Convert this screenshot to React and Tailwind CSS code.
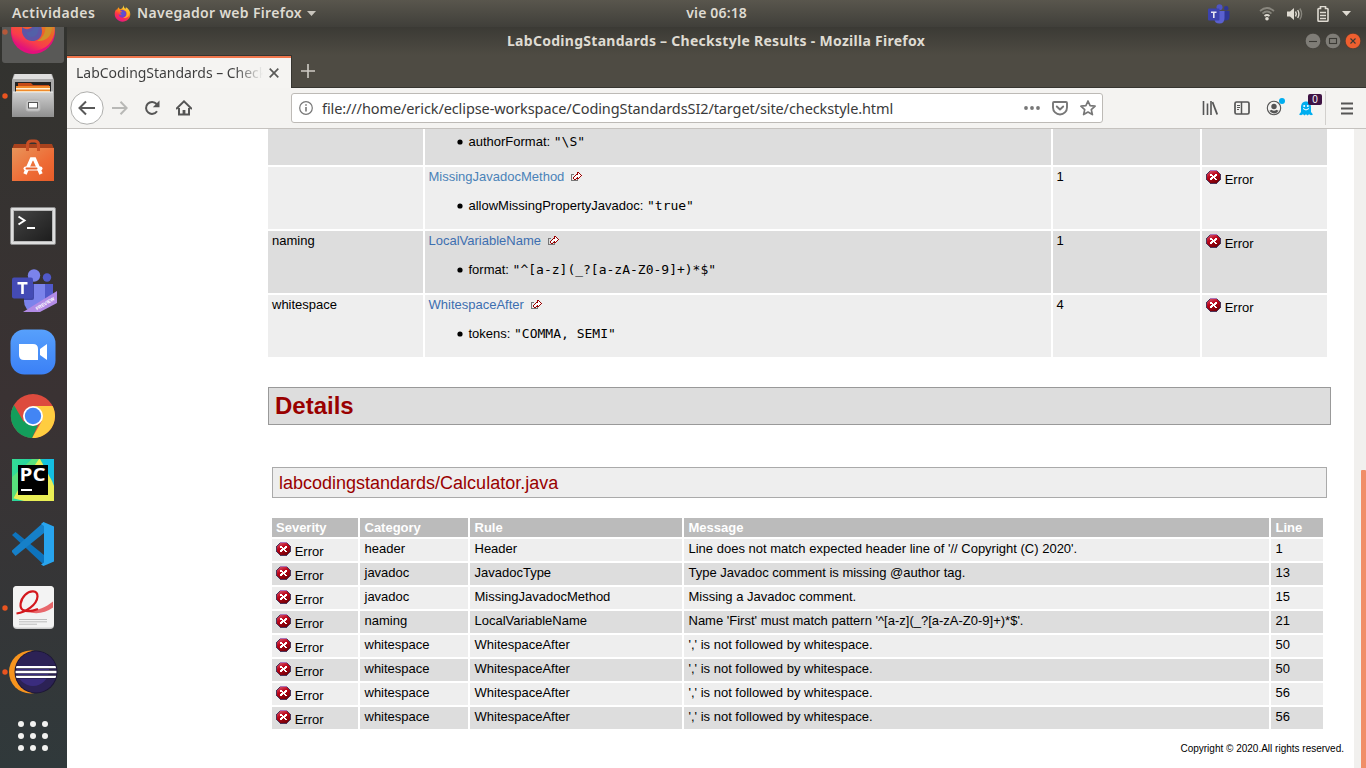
import React from "react";

const uiFont = "font-['Noto_Sans','Open_Sans',sans-serif]";

function ErrorIcon() {
  return (
    <svg className="block h-[15px] w-4 shrink-0" viewBox="0 0 16 15" shapeRendering="crispEdges">
      <defs>
        <linearGradient id="errFill" x1="0" y1="0" x2="0.5" y2="1">
          <stop offset="0" stopColor="#d4607c" />
          <stop offset="0.45" stopColor="#c0061c" />
          <stop offset="1" stopColor="#7c0008" />
        </linearGradient>
      </defs>
      <path d="M4 0h7v1h1v1h1v1h1v1h1v6h-1v1h-1v1h-1v1h-1v1H4v-1H3v-1H2v-1H1v-1H0V4h1V3h1V2h1V1h1z" fill="#4b3559" />
      <path d="M4 0h7v1H4z" fill="#a873b4" />
      <path d="M4 1h7v1h1v1h1v1h1v6h-1v1h-1v1h-1v1H4v-1H3v-1H2v-1H1V4h1V3h1V2h1z" fill="url(#errFill)" />
      <path d="M4 4h2v1h1v1h1V5h1V4h2v2h-1v1H9v1h1v1h1v1H9V9H8V8H7v1H6v1H4V8h1V7h1V6H4z" fill="#fff" />
    </svg>
  );
}

function ExternalIcon() {
  return (
    <svg className="ml-[7px] mt-[3px] h-[9px] w-[11px] shrink-0" viewBox="0 0 11 9" shapeRendering="crispEdges">
      <path d="M3 2.500H.5v6h6V7" fill="none" stroke="#777" />
      <path d="M7 1h1v1h1v1h1v1H9v1H8v1H7V5H5v1H4v1H3V5h1V4h1V3h2z" fill="#fff" />
      <path d="M6 0h1v1H6zM7 0h1v1H7zM8 1h1v1H8zM9 2h1v1H9zM10 3h1v1h-1zM9 4h1v1H9zM8 5h1v1H8zM7 6h1v1H7zM6 5h1v2H6zM5 6h1v1H5zM4 7h1v1H4zM3 7h1v1H3zM2 5h1v2H2zM3 4h1v1H3zM4 3h1v1H4zM5 2h2v1H5zM6 1h1v1H6z" fill="#900" />
    </svg>
  );
}

function ErrorCell() {
  return (
    <div className="flex pl-1 pt-[3px]">
      <ErrorIcon />
      <span className="ml-[2.7px] mt-[2px] leading-[15px]">Error</span>
    </div>
  );
}

const rules = [
  { cat: "", link: "MissingJavadocMethod", color: "text-[#4a82b8]", key: "allowMissingPropertyJavadoc:", val: '"true"', n: "1" },
  { cat: "naming", link: "LocalVariableName", color: "text-[#3d6fb0]", key: "format:", val: '"^[a-z](_?[a-zA-Z0-9]+)*$"', n: "1" },
  { cat: "whitespace", link: "WhitespaceAfter", color: "text-[#3d6fb0]", key: "tokens:", val: '"COMMA, SEMI"', n: "4" },
];

const details = [
  ["header", "Header", "Line does not match expected header line of '// Copyright (C) 2020'.", "1"],
  ["javadoc", "JavadocType", "Type Javadoc comment is missing @author tag.", "13"],
  ["javadoc", "MissingJavadocMethod", "Missing a Javadoc comment.", "15"],
  ["naming", "LocalVariableName", "Name 'First' must match pattern '^[a-z](_?[a-zA-Z0-9]+)*$'.", "21"],
  ["whitespace", "WhitespaceAfter", "',' is not followed by whitespace.", "50"],
  ["whitespace", "WhitespaceAfter", "',' is not followed by whitespace.", "50"],
  ["whitespace", "WhitespaceAfter", "',' is not followed by whitespace.", "56"],
  ["whitespace", "WhitespaceAfter", "',' is not followed by whitespace.", "56"],
];

function Property({ name, value }) {
  return (
    <div className="flex h-[15px] items-center leading-[15px]">
      <svg className="ml-7 mr-[6px] mt-px h-[6px] w-[6px]" viewBox="0 0 6 6">
        <circle cx="3" cy="3" r="2.6" fill="#000" />
      </svg>
      <span className="whitespace-pre">{name} </span>
      <span className="font-['DejaVu_Sans_Mono',monospace] text-[13px]">{value}</span>
    </div>
  );
}

const ruleGrid = "grid grid-cols-[155px_626px_147px_125px] gap-x-[2px]";
const detailGrid = "grid grid-cols-[86px_108px_212px_585px_52px] gap-x-[2px]";

function Page() {
  return (
    <main className="w-[1287px] shrink-0 bg-white pl-[201px] font-['Liberation_Sans',Arial,sans-serif] text-[13px] leading-[15px] text-black">
      <div className="flex w-[1059px] flex-col gap-[2px]">
        <div className={`${ruleGrid} h-9`}>
          <div className="bg-[#ddd]" />
          <div className="bg-[#ddd] pl-[3.5px] pt-[5px]"><Property name="authorFormat:" value={'"\\S"'} /></div>
          <div className="bg-[#ddd]" />
          <div className="bg-[#ddd]" />
        </div>
        {rules.map((r, i) => {
          const bg = i % 2 ? "bg-[#ddd]" : "bg-[#eee]";
          return (
            <div key={i} className={`${ruleGrid} h-[62px]`}>
              <div className={`${bg} pl-1 pt-[2px]`}>{r.cat}</div>
              <div className={`${bg} pl-[3.5px] pt-[2px]`}>
                <div className={`mb-[14px] flex ${r.color}`}>{r.link}<ExternalIcon /></div>
                <Property name={r.key} value={r.val} />
              </div>
              <div className={`${bg} pl-[3.5px] pt-[2px]`}>{r.n}</div>
              <div className={bg}><ErrorCell /></div>
            </div>
          );
        })}
      </div>
      <h2 className="mt-[30px] h-[38px] w-[1063px] border border-[#999] bg-[#ddd] pl-[6px] text-[24px] font-bold leading-[36px] text-[#900]">Details</h2>
      <h3 className="ml-1 mt-[42px] h-[31px] w-[1055px] border border-[#aaa] bg-[#eee] pl-[6px] text-[18px] leading-[30px] text-[#900]">labcodingstandards/Calculator.java</h3>
      <div className="ml-1 mt-5 flex flex-col gap-[2px]">
        <div className={`${detailGrid} h-[19px] font-bold text-white`}>
          {["Severity", "Category", "Rule", "Message", "Line"].map((h, j) => (
            <div key={h} className={`bg-[#bbb] pt-[2px] ${j ? "pl-[4.5px]" : "pl-1"}`}>{h}</div>
          ))}
        </div>
        {details.map((d, i) => {
          const bg = i % 2 ? "bg-[#ddd]" : "bg-[#eee]";
          return (
            <div key={i} className={`${detailGrid} h-[22px]`}>
              <div className={bg}><ErrorCell /></div>
              {d.map((t, j) => (
                <div key={j} className={`${bg} pl-[4.5px] pt-[2px]`}>{t}</div>
              ))}
            </div>
          );
        })}
      </div>
      <footer className="mt-[13px] pr-[10px] pt-px text-right text-[10px] leading-[12px]">Copyright © 2020.All rights reserved.</footer>
    </main>
  );
}

function FirefoxLogo({ className, id }) {
  return (
    <svg className={className} viewBox="0 0 48 48">
      <defs>
        <linearGradient id={`${id}a`} x1="0.8" y1="0.05" x2="0.35" y2="1">
          <stop offset="0.05" stopColor="#fff44f" />
          <stop offset="0.35" stopColor="#ff980e" />
          <stop offset="0.65" stopColor="#ff3647" />
          <stop offset="1" stopColor="#e31587" />
        </linearGradient>
        <radialGradient id={`${id}b`} cx="0.5" cy="0.45" r="0.6">
          <stop offset="0" stopColor="#4a5fd6" />
          <stop offset="1" stopColor="#8a2fc0" />
        </radialGradient>
      </defs>
      <path d="M28 1c-2 5 1 7 4 10 2-1 2-3 2-5 8 5 12 12 12 20 0 12-10 21-22 21S2 38 2 25c0-6 2-10 5-14 0 2 0 3 1 4 1-4 3-7 6-9 0 3 1 5 3 6 4-1 7-3 8-6 1-2 2-4 3-5z" fill={`url(#${id}a)`} />
      <path d="M17 16c3-3 8-3 11-1 5 2 8 6 7 11-1 6-6 10-12 10-6-1-10-5-10-10 3 2 6 2 9 0-3-1-5-3-5-5 2 0 5 0 6-2-1-1-4-1-6-3z" fill={`url(#${id}b)`} />
      <path d="M28 12c7 2 9 8 8 14-1 5-5 9-10 10 7 2 15-2 17-9 2-10-4-17-11-20 2 3 1 5-4 5z" fill="#ffbd2e" opacity="0.8" />
    </svg>
  );
}

function TeamsShape() {
  return (
    <g>
      <circle cx="22" cy="6.500" r="6.200" fill="#7b83eb" />
      <circle cx="35" cy="8.500" r="4.200" fill="#5059c9" />
      <path d="M26 15h15v13q0 8-8 8h-7z" fill="#5059c9" />
      <path d="M12 15h21v16q0 11-11 11-10 0-10-10z" fill="#7b83eb" />
      <path d="M12 15h10v14q0 2-2 2h-8z" fill="#4047a8" />
      <rect x="0" y="8.500" width="21" height="21" rx="2" fill="#444bb5" />
      <path d="M5.500 13h10v2.600h-3.700V25H9.200v-9.400H5.500z" fill="#fff" />
    </g>
  );
}

function TrayTeams() {
  return (
    <svg className="h-5 w-[22px]" viewBox="0 0 22 20">
      <circle cx="11.500" cy="3.300" r="3" fill="#4f55c4" />
      <circle cx="18.200" cy="4.200" r="2.200" fill="#2f3694" />
      <path d="M14 7h7.500v6q0 3.500-4 3.500H14z" fill="#2f3694" />
      <path d="M7 7h9.500v7q0 5.500-5 5.500T6.500 15z" fill="#5a60d0" />
      <rect x="0" y="4.500" width="11.500" height="12" rx="1" fill="#3b42ad" />
      <path d="M3 7.500h5.500v1.600H6.600V14H5V9.100H3z" fill="#e6e6f2" />
    </svg>
  );
}

function DockCell({ running, active, children }) {
  return (
    <div className="flex h-16 w-[67px] shrink-0">
      <svg className="h-16 w-[67px]" viewBox="0 0 67 64">
        {active && <rect x="2" y="1" width="62" height="62" rx="3" fill="#595957" />}
        {running && <circle cx="5" cy="32" r="2.700" fill={active ? "#b5583a" : "#e95420"} />}
        {children}
      </svg>
    </div>
  );
}

function Dock() {
  return (
    <nav className="flex h-[741px] w-[67px] shrink-0 flex-col justify-end overflow-hidden bg-gradient-to-b from-[#32332f] via-[#3a3233] to-[#30393b]">
      <DockCell running active>
        <defs>
          <linearGradient id="ffx" x1="0.9" y1="0" x2="0.4" y2="1">
            <stop offset="0.1" stopColor="#c8a52c" />
            <stop offset="0.5" stopColor="#ee6427" />
            <stop offset="0.8" stopColor="#f93c4b" />
            <stop offset="1" stopColor="#e0127c" />
          </linearGradient>
        </defs>
        <circle cx="33" cy="32" r="22" fill="#e4107c" />
        <ellipse cx="33" cy="29.500" rx="21.800" ry="21.500" fill="url(#ffx)" />
        <path d="M43 20c5 7 2 17-6 21 9 1 15-5 15-14z" fill="#d09028" />
        <path d="M22 27c3 3 8 3 11-1h8c3 8-1 15-9 15-5 0-9-4-10-9z" fill="#5f55a5" />
        <path d="M26 32c4 1 7-2 9-6h4c0 7-3 11-7 11-3 0-5-2-6-5z" fill="#5360a8" />
      </DockCell>

      <DockCell running>
        <defs>
          <linearGradient id="cab" x1="0" y1="0" x2="0" y2="1">
            <stop offset="0" stopColor="#d0d0d0" />
            <stop offset="1" stopColor="#8f8f8f" />
          </linearGradient>
        </defs>
        <path d="M14 10h38l2 6v37H12V16z" fill="#aaa" />
        <path d="M15 10h36l2 5H13z" fill="#dedede" />
        <rect x="15" y="18" width="36" height="12" fill="#232323" />
        <path d="M18 19h13l2 2h16v8H18z" fill="#c44a16" />
        <rect x="16" y="22" width="34" height="7" fill="#f08a2a" />
        <rect x="16" y="24" width="34" height="1.500" fill="#fff1d8" />
        <rect x="16" y="27" width="34" height="2" fill="#ffd08a" />
        <path d="M13 28h40l1 25H12z" fill="url(#cab)" />
        <path d="M13 28h40" stroke="#eee" />
        <rect x="26" y="36" width="14" height="11" rx="2" fill="#c9c9c9" stroke="#b5b5b5" />
        <rect x="28.500" y="38.500" width="9" height="5.500" fill="#fff" stroke="#555" />
      </DockCell>

      <DockCell>
        <defs>
          <linearGradient id="bag" x1="0" y1="0" x2="1" y2="1">
            <stop offset="0" stopColor="#e8945a" />
            <stop offset="0.6" stopColor="#ee6b35" />
            <stop offset="1" stopColor="#e65c28" />
          </linearGradient>
        </defs>
        <path d="M14 16h38l2 5H12z" fill="#a8421d" />
        <rect x="12" y="20" width="42" height="33" fill="url(#bag)" />
        <path d="M27.500 23v-6q0-4 4-4h3q4 0 4 4v6" fill="none" stroke="#c84f26" strokeWidth="3" />
        <path d="M25 46l6.500-15h3L41 46" fill="none" stroke="#fff" strokeWidth="3.500" />
        <rect x="23.500" y="38.500" width="19" height="4" rx="2" fill="#fff" />
        <rect x="25.500" y="39.500" width="12" height="2" rx="1" fill="#e9632d" />
      </DockCell>

      <DockCell>
        <defs>
          <linearGradient id="term" x1="0" y1="0" x2="1" y2="1">
            <stop offset="0" stopColor="#454545" />
            <stop offset="0.5" stopColor="#303030" />
            <stop offset="1" stopColor="#1d1d1d" />
          </linearGradient>
        </defs>
        <rect x="10.500" y="15.500" width="45" height="37" rx="1.500" fill="#dedede" stroke="#8c8c8c" />
        <rect x="13" y="18" width="40" height="32" fill="#b9b9b9" />
        <rect x="14" y="19" width="38" height="30" fill="url(#term)" />
        <path d="M18.500 24.500l6 4-6 4" fill="none" stroke="#fff" strokeWidth="2" />
        <path d="M27 36h8" stroke="#fff" strokeWidth="2" />
      </DockCell>

      <DockCell>
        <g transform="translate(12 13)"><TeamsShape /></g>
        <path d="M57 35v12L40 56H23z" fill="#b18be5" />
        <text x="0" y="0" transform="translate(37 54.500) rotate(-31)" fontSize="5" textLength="21" lengthAdjust="spacingAndGlyphs" fontWeight="bold" fill="#fff" fontFamily="Liberation Sans, sans-serif">PREVIEW</text>
      </DockCell>

      <DockCell>
        <defs>
          <linearGradient id="zm" x1="0" y1="0" x2="0" y2="1">
            <stop offset="0" stopColor="#57a0fc" />
            <stop offset="1" stopColor="#3b80f6" />
          </linearGradient>
        </defs>
        <rect x="10.500" y="9.500" width="45" height="45" rx="14" fill="url(#zm)" />
        <path d="M19 24h14q5 0 5 5v11H24q-5 0-5-5z" fill="#fff" />
        <path d="M47 24v16l-7-5v-6z" fill="#fff" />
      </DockCell>

      <DockCell>
        <circle cx="33" cy="32" r="22" fill="#dd4b3e" />
        <path d="M13.900 21L23.500 37.500 33 43l-9 9.500.5 0L33 54A22 22 0 0 1 13.900 21z" fill="#139e5b" />
        <path d="M33 22h19.600A22 22 0 0 1 32 54l9.500-16.500z" fill="#ffcd40" />
        <path d="M24 37l9 5 5-1-6 13A22 22 0 0 1 24 52z" fill="#139e5b" />
        <circle cx="33" cy="32" r="10" fill="#fff" />
        <circle cx="33" cy="32" r="8.200" fill="#4285f4" />
      </DockCell>

      <DockCell>
        <defs>
          <linearGradient id="pyc" x1="0" y1="0" x2="1" y2="0.2">
            <stop offset="0" stopColor="#35dc94" />
            <stop offset="0.6" stopColor="#1fd0a6" />
            <stop offset="0.8" stopColor="#14bfe2" />
          </linearGradient>
        </defs>
        <rect x="12" y="11" width="42" height="42" fill="url(#pyc)" />
        <path d="M34 11h6l12 22 2 5v15H24l-12-3V33z" fill="#e9ee55" />
        <path d="M12 29l20-18h7L18 42l-6 11z" fill="#58e07d" />
        <rect x="18" y="17" width="30" height="30" fill="#000" />
        <text x="19.500" y="32.500" fontSize="18" textLength="26" lengthAdjust="spacingAndGlyphs" fontWeight="bold" fill="#fff" fontFamily="Open Sans, sans-serif">PC</text>
        <rect x="21" y="41" width="11" height="2" fill="#fff" />
      </DockCell>

      <DockCell>
        <path d="M12 23l3.500-3L44 43v10z" fill="#0d73bd" />
        <path d="M12 40l3.500 4L44 21V10L12 38.500z" fill="#1680c9" />
        <path d="M43.500 10L54 14.500v35L43.500 54 41 52.500l3-2V14l-3-2z" fill="#28a4ee" />
      </DockCell>

      <DockCell running>
        <rect x="13" y="10" width="41" height="43" rx="4" fill="#ccc" />
        <rect x="13" y="10" width="41" height="41.500" rx="4" fill="#f3f3f3" />
        <path d="M24 33.500c8 3 19 0 29-8v6c-8 6-18 7-26 4z" fill="#e8686c" />
        <path d="M16.500 37.500C26 36 37 29 37.500 20.500 37.500 14 30 14 25 19c-5 5-6 13-2 15 4 2 10 1 15-1" fill="none" stroke="#d3181d" strokeWidth="2.200" />
        <path d="M19 43.500h28M19 45.800h28M19 48.200h18" stroke="#bdbdbd" />
      </DockCell>

      <DockCell running>
        <defs><clipPath id="ecl"><circle cx="36" cy="32" r="20.500" /></clipPath></defs>
        <circle cx="30.500" cy="32" r="21.500" fill="#f7941e" />
        <circle cx="36" cy="32" r="21.500" fill="#1d1736" />
        <g clipPath="url(#ecl)">
          <rect x="14" y="10" width="44" height="44" fill="#2c2255" />
          <circle cx="33" cy="30" r="16" fill="#3a2c7e" />
          <rect x="14" y="10" width="44" height="15" fill="#2c2255" />
          <path d="M14 28.200h44M14 33h44M14 37.800h44" stroke="#1d1736" strokeWidth="3.400" transform="translate(0 -1)" />
          <path d="M14 28.200h44M14 33h44M14 37.800h44" stroke="#fff" strokeWidth="2.300" transform="translate(0 -1)" />
        </g>
      </DockCell>

      <DockCell>
        {[20, 32, 44].map((y) => [21, 33, 45].map((x) => <circle key={`${x}-${y}`} cx={x} cy={y} r="3" fill="#f2f2f0" />))}
      </DockCell>
    </nav>
  );
}

function TopBar() {
  return (
    <header className={`${uiFont} grid h-[27px] w-full grid-cols-[1fr_auto_1fr] items-center bg-gradient-to-b from-[#59564d] to-[#403f3a] text-[14px] font-semibold leading-[25px] text-[#dfdbd2]`}>
      <div className="flex items-center pl-[12px]">
        <span className="w-[84px] whitespace-nowrap pb-[2px] tracking-[0.43px]">Actividades</span>
        <FirefoxLogo id="fft" className="ml-[18px] h-[17px] w-[17px]" />
        <span className="ml-[6px] w-[165px] whitespace-nowrap pb-[2px] tracking-[0.32px]">Navegador web Firefox</span>
        <svg className="ml-[5px] h-[5px] w-[9px]" viewBox="0 0 9 5"><path d="M0 0h9L4.500 5z" fill="#c9c5bd" /></svg>
      </div>
      <span className="w-[128px] whitespace-nowrap pb-[2px] text-right tracking-[0.15px]">vie 06:18</span>
      <div className="flex items-center justify-end pr-[15px]">
        <TrayTeams />
        <svg className="ml-[29px] h-[15px] w-4" viewBox="0 0 16 15" fill="none" stroke="#dfdbd2" strokeWidth="1.700">
          <path d="M1 5q7-6 14 0" opacity="0.4" /><path d="M3.500 7.500q4.500-4 9 0" opacity="0.4" /><path d="M5.500 10q2.500-2 5 0" />
          <circle cx="8" cy="12.700" r="1.800" fill="#dfdbd2" stroke="none" />
        </svg>
        <svg className="ml-3 h-[14px] w-4" viewBox="0 0 16 14" fill="none" stroke="#dfdbd2" strokeWidth="1.400">
          <path d="M0 4.500h3L7 1v12L3 9.500H0z" fill="#dfdbd2" stroke="none" />
          <path d="M8.500 4.500q1.600 2.500 0 5M10.700 3q2.400 4 0 8" /><path d="M12.800 1.500q3.600 5.500 0 11" opacity="0.4" />
        </svg>
        <svg className="ml-[14px] h-4 w-3" viewBox="0 0 12 16" fill="none" stroke="#dfdbd2">
          <path d="M3.500 2.500v-2h5v2h1.700q.8 0 .8.800v11.200q0 .700-.8.700H1.800q-.8 0-.8-.7V3.300q0-.8.8-.8z" strokeWidth="1.600" />
          <path d="M3 6.500h6M3 9.500h6M3 12.500h6" strokeWidth="1.600" />
        </svg>
        <svg className="ml-[13px] h-[5px] w-[9px]" viewBox="0 0 9 5"><path d="M0 0h9L4.500 5z" fill="#dfdbd2" /></svg>
      </div>
    </header>
  );
}

function WindowButton({ close, children }) {
  return (
    <svg className="h-4 w-4" viewBox="0 0 16 16">
      <circle cx="8" cy="8" r="7.800" fill={close ? "#ef5f2f" : "#7f7d77"} stroke="#35342f" strokeWidth="0.600" />
      <g fill="none" stroke="#3b3a35" strokeWidth="1.100">{children}</g>
    </svg>
  );
}

function TitleBar() {
  return (
    <div className="grid h-[28px] grid-cols-[1fr_auto_1fr] items-center bg-gradient-to-b from-[#3b3a35] to-[#4e4b43]">
      <span />
      <span className={`${uiFont} w-[419px] whitespace-nowrap pb-[2px] text-[14px] font-bold tracking-[0.28px] text-[#dfdbd2]`}>LabCodingStandards – Checkstyle Results - Mozilla Firefox</span>
      <div className="flex justify-end gap-1 pr-[5px]">
        <WindowButton><path d="M4 8.500h8" /></WindowButton>
        <WindowButton><rect x="4.500" y="5.500" width="7" height="5" /></WindowButton>
        <WindowButton close><path d="M5.500 5.500l5 5m0-5l-5 5" /></WindowButton>
      </div>
    </div>
  );
}

function Tabs() {
  return (
    <div className="flex h-[33px] bg-[#4e4b43]">
      <div className="flex w-[225px] items-center border-r border-t border-[#363530] bg-[#f5f4f2]">
        <div className="flex h-8 w-full items-center border-t-2 border-[#f0764c] pl-[9px]">
          <div className={`${uiFont} w-[187px] overflow-hidden whitespace-nowrap bg-gradient-to-r from-[#3d3d3d] from-85% to-transparent bg-clip-text pb-[2px] text-[14px] tracking-[-0.03px] text-transparent`}>LabCodingStandards – Checkstyle Results</div>
          <svg className="ml-[6px] h-[10px] w-[10px]" viewBox="0 0 10 10"><path d="M.7.7l8.600 8.600m0-8.600L.7 9.300" stroke="#5a5a58" strokeWidth="1.700" /></svg>
        </div>
      </div>
      <div className="flex flex-1 items-center border-b border-[#363530] pl-[9px]">
        <svg className="h-[14px] w-[14px]" viewBox="0 0 14 14"><path d="M7 0v14M0 7h14" stroke="#cfccc5" strokeWidth="1.600" /></svg>
      </div>
    </div>
  );
}

function Toolbar() {
  return (
    <div className="flex h-[41px] items-center border-b border-[#c5c2bf] bg-[#f4f3f1] pl-[3px]">
      <svg className="h-[34px] w-[34px]" viewBox="0 0 34 34" fill="none">
        <circle cx="17" cy="17" r="16.200" fill="#fff" stroke="#aeaeac" />
        <path d="M25 17H9.700M16 10.500L9.500 17l6.500 6.500" stroke="#585858" strokeWidth="2" />
      </svg>
      <svg className="ml-2 h-4 w-4" viewBox="0 0 16 16" fill="none"><path d="M0 8h14.500M8.500 1.800L14.700 8l-6.200 6.200" stroke="#b8b8b6" strokeWidth="2" /></svg>
      <svg className="ml-4 h-4 w-4" viewBox="0 0 16 16"><path d="M13 11.300A6 6 0 1 1 12.600 4" fill="none" stroke="#555" strokeWidth="2" /><path d="M15.500.5v6.700H8.800z" fill="#555" /></svg>
      <svg className="ml-4 h-4 w-4" viewBox="0 0 16 16" fill="none" stroke="#555"><path d="M.7 8.500L8 1.300l7.300 7.200" strokeWidth="1.900" strokeLinecap="round" /><path d="M3 8v6.500h10V8" strokeWidth="2" /><path d="M8 14v-4" strokeWidth="2.800" /></svg>
      <div className="ml-[99px] flex h-[30px] w-[812px] items-center rounded-[3px] border border-[#bdbab6] bg-white pl-[7px] pr-[6px]">
        <svg className="h-[14px] w-[14px]" viewBox="0 0 14 14"><circle cx="7" cy="7" r="6.300" fill="none" stroke="#777" strokeWidth="1.200" /><path d="M6.200 6h1.600v4.500H6.200zM6.200 3.200h1.600v1.600H6.200z" fill="#777" /></svg>
        <span className={`${uiFont} ml-[9px] flex-1 whitespace-nowrap pt-px text-[14.5px] tracking-[-0.1px] text-[#3a3a3a]`}>file:///home/erick/eclipse-workspace/CodingStandardsSI2/target/site/checkstyle.html</span>
        <svg className="h-4 w-4" viewBox="0 0 16 16" fill="#777"><circle cx="2" cy="8" r="1.900" /><circle cx="8" cy="8" r="1.900" /><circle cx="14" cy="8" r="1.900" /></svg>
        <svg className="ml-3 h-4 w-4" viewBox="0 0 16 16" fill="none" stroke="#777" strokeWidth="1.900" strokeLinecap="round" strokeLinejoin="round"><path d="M2 2h12q1 0 1 1v4.500a7 7 0 0 1-14 0V3q0-1 1-1z" /><path d="M4.800 6.500L8 9.500l3.200-3" /></svg>
        <svg className="ml-3 h-4 w-4" viewBox="0 0 16 16"><path d="M8 1l2.100 4.700 5 .5-3.800 3.400 1.100 5L8 12l-4.400 2.600 1.100-5L.9 6.200l5-.5z" fill="none" stroke="#777" strokeWidth="1.700" strokeLinejoin="round" /></svg>
      </div>
      <svg className="ml-[99px] h-[14px] w-4" viewBox="0 0 16 14"><path d="M1.500 0v14M5.500 2.500V14M9 0v14" stroke="#555" strokeWidth="1.600" /><path d="M10.500 1l4.700 12.500" stroke="#555" strokeWidth="1.800" /></svg>
      <svg className="ml-4 h-[14px] w-4" viewBox="0 0 16 14" fill="none" stroke="#555"><rect x="1" y="1" width="14" height="12" rx="1.500" strokeWidth="1.700" /><path d="M7.500 1v12" strokeWidth="1.500" /><path d="M3 4.500h3M3 6.500h3M3 8.500h2" /></svg>
      <div className="relative ml-4 h-4 w-4">
        <svg className="h-4 w-4" viewBox="0 0 16 16"><circle cx="8" cy="8" r="6.700" fill="none" stroke="#555" strokeWidth="1.100" /><circle cx="8" cy="6.500" r="2.700" fill="#555" /><path d="M3.500 10.500q1.500 0 2-.7 2.500 1.700 5 0 .5.7 2 .7-1.500 3-4.500 3t-4.500-3z" fill="#555" /></svg>
        <span className="absolute -right-[3px] -top-[2px] h-[6px] w-[6px] rounded-full bg-[#00aef0]" />
      </div>
      <div className="relative ml-4 h-4 w-4">
        <svg className="h-4 w-4" viewBox="0 0 16 16"><path d="M3 7.500C3 3.500 5 1.500 8 1.500s5 2 5 6V12l2 2.500-2 .7-2-.9-1.400 1.200L8 14.300l-1.600 1.200L5 14.300l-2 .9-2-.7L3 12z" fill="#00aef0" /><circle cx="6.200" cy="6" r="1" fill="#fff" /><circle cx="9.800" cy="6" r="1" fill="#fff" /><path d="M5 8.500q3 3 6 0" fill="none" stroke="#fff" /></svg>
        <span className="absolute -top-[6px] left-[10px] h-[11px] w-[14px] rounded-[2px] bg-[#3f1344] text-center font-['Liberation_Sans',sans-serif] text-[10px] leading-[11px] text-white">0</span>
      </div>
      <div className="ml-[11px] h-[34px] w-px bg-[#d2d0cd]" />
      <svg className="ml-[15px] h-[13px] w-3" viewBox="0 0 12 13"><path d="M0 1.500h12M0 6.500h12M0 11.500h12" stroke="#555" strokeWidth="1.900" /></svg>
    </div>
  );
}

export default function App() {
  return (
    <div className="flex h-[768px] w-[1366px] flex-col overflow-hidden bg-[#3b3a35]">
      <TopBar />
      <div className="flex h-[741px]">
        <Dock />
        <div className="flex w-[1299px] flex-col">
          <TitleBar />
          <Tabs />
          <Toolbar />
          <div className="flex flex-1 overflow-hidden">
            <Page />
            <div className="flex w-3 justify-end bg-[#f1f0ee] pt-[341px]">
              <div className="w-[5px] rounded-t-[1px] bg-[#f08e68]" />
            </div>
          </div>
        </div>
      </div>
    </div>
  );
}
